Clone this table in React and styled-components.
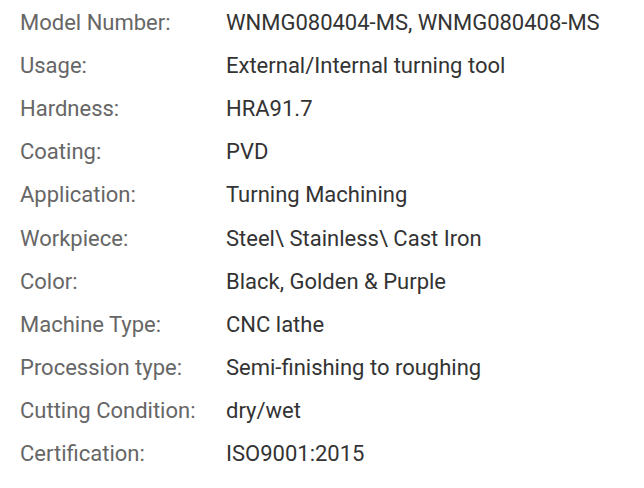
import React from "react";
import styled, { createGlobalStyle } from "styled-components";

const GlobalStyle = createGlobalStyle`
  html, body {
    margin: 0;
    padding: 0;
    background: #fff;
  }
`;

const SpecTable = styled.div`
  display: grid;
  grid-template-columns: 206px 1fr;
  grid-auto-rows: 43.1px;
  padding: 1px 0 0 20px;
  font-family: Roboto, "Liberation Sans", sans-serif;
  font-size: 22px;
`;

const Cell = styled.div`
  display: flex;
  align-items: center;
  color: ${props => props.label ? '#666' : '#333'};
  white-space: nowrap;
`;

const specs = [
  ["Model Number:", "WNMG080404-MS, WNMG080408-MS"],
  ["Usage:", "External/Internal turning tool"],
  ["Hardness:", "HRA91.7"],
  ["Coating:", "PVD"],
  ["Application:", "Turning Machining"],
  ["Workpiece:", "Steel\\ Stainless\\ Cast Iron"],
  ["Color:", "Black, Golden & Purple"],
  ["Machine Type:", "CNC lathe"],
  ["Procession type:", "Semi-finishing to roughing"],
  ["Cutting Condition:", "dry/wet"],
  ["Certification:", "ISO9001:2015"],
];

export default function App() {
  return (<>
    <GlobalStyle />
    <SpecTable>
      {specs.map(([k, v], i) => (
        <React.Fragment key={i}>
          <Cell label>{k}</Cell>
          <Cell>{v}</Cell>
        </React.Fragment>
      ))}
    </SpecTable>
  </>)
}
